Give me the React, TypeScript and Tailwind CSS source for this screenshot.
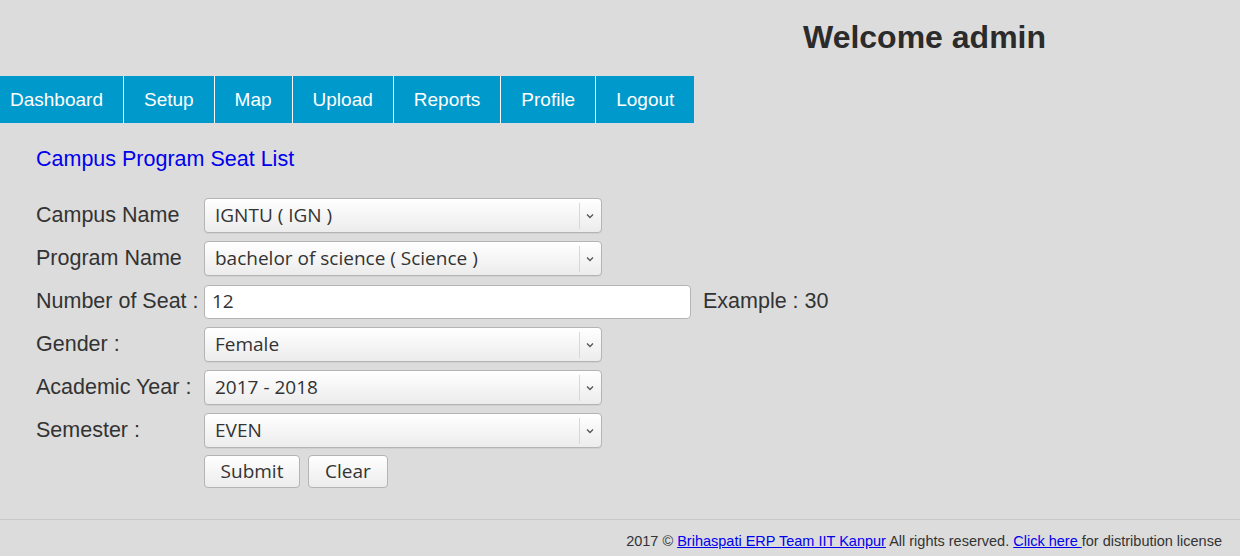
import React from 'react';

const navItems = ['Dashboard', 'Setup', 'Map', 'Upload', 'Reports', 'Profile', 'Logout'];

function SelectBox({ value }: { value: string }) {
  return (
    <div className="flex items-center w-[398px] h-[35px] rounded-[4px] border border-[#b4b4b4] bg-gradient-to-b from-white to-[#ececec] shadow-[0_1px_0_rgba(0,0,0,0.05)]">
      <span className="flex-1 pl-[10px] text-[19px] text-[#333] font-['Open_Sans',sans-serif] leading-none">{value}</span>
      <span className="h-[26px] border-l border-[#d8d8d8]" />
      <svg width="20" height="20" viewBox="0 0 20 20" className="mr-[1px]">
        <path d="M7 8.5 L10 11.5 L13 8.5" fill="none" stroke="#555" strokeWidth="1.3" />
      </svg>
    </div>
  );
}

function Row({ label, children }: { label: string; children: React.ReactNode }) {
  return (
    <div className="flex items-center h-[35px] mb-[8px]">
      <div className="w-[168px] text-[21.5px] text-[#333] whitespace-nowrap">{label}</div>
      {children}
    </div>
  );
}

export default function App() {
  return (
    <div className="w-[1240px] h-[556px] bg-[#dcdcdc] font-['Liberation_Sans',Arial,sans-serif] flex flex-col">
      {/* header */}
      <div className="h-[76px] flex items-center">
        <h1 className="ml-[803px] text-[32px] font-bold text-[#2b2b2b] mt-[-3px]">Welcome admin</h1>
      </div>

      {/* nav */}
      <div className="h-[47px] bg-[#0099cc] w-[694px] flex">
        {navItems.map((item, i) => (
          <div
            key={item}
            className={`h-full flex items-center text-white text-[19px] pt-[1px] ${i === 0 ? 'pl-[10px] pr-[20px]' : 'px-[20px]'} ${i < navItems.length - 1 ? 'border-r border-white' : ''}`}
          >
            {item}
          </div>
        ))}
      </div>

      {/* body */}
      <div className="flex-1 pl-[36px] pt-[20px]">
        <div className="text-[21.5px] leading-[32px] text-[#0000ee] mb-[23px]">Campus Program Seat List</div>

        <Row label="Campus Name">
          <SelectBox value="IGNTU ( IGN )" />
        </Row>
        <Row label="Program Name">
          <SelectBox value="bachelor of science ( Science )" />
        </Row>
        <Row label="Number of Seat :">
          <div className="w-[487px] h-[34px] rounded-[4px] border border-[#b4b4b4] bg-white flex items-center pl-[7px] text-[19px] text-[#333] font-['Open_Sans',sans-serif]">12</div>
          <span className="ml-[12px] text-[21.5px] text-[#333]">Example : 30</span>
        </Row>
        <Row label="Gender :">
          <SelectBox value="Female" />
        </Row>
        <Row label="Academic Year :">
          <SelectBox value="2017 - 2018" />
        </Row>
        <Row label="Semester :">
          <SelectBox value="EVEN" />
        </Row>
        <div className="flex gap-[8px] ml-[168px] -mt-[1px]">
          <button className="w-[96px] h-[33px] rounded-[4px] border border-[#b4b4b4] bg-gradient-to-b from-white to-[#ececec] text-[19px] text-[#333] font-['Open_Sans',sans-serif]">Submit</button>
          <button className="w-[80px] h-[33px] rounded-[4px] border border-[#b4b4b4] bg-gradient-to-b from-white to-[#ececec] text-[19px] text-[#333] font-['Open_Sans',sans-serif]">Clear</button>
        </div>
      </div>

      {/* footer */}
      <div className="h-[37px] border-t border-[#c8c8c8] flex items-start justify-end pr-[18px] pt-[11px] text-[14.5px] text-[#333]">
        <span>
          2017 © <a className="text-[#0000ee] underline" href="#">Brihaspati ERP Team IIT Kanpur</a> All rights reserved.{' '}
          <a className="text-[#0000ee] underline" href="#">Click here </a>for distribution license
        </span>
      </div>
    </div>
  );
}
